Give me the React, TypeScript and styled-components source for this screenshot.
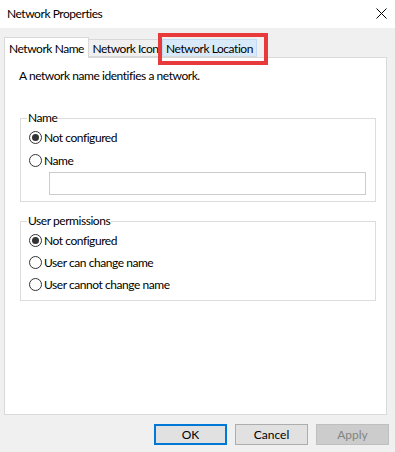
import styled, { createGlobalStyle } from "styled-components";

const GlobalStyle = createGlobalStyle`
    html, body {
        margin: 0;
        padding: 0;
        background: #f0f0f0;
    }
    body {
        font-family: "Segoe UI", Lato, "Noto Sans", sans-serif;
        font-size: 12px;
        letter-spacing: -0.45px;
        color: #000;
    }
`;

const Window = styled.div`
    width: 395px;
    height: 452px;
    display: flex;
    flex-direction: column;
    background: #f0f0f0;
    overflow: hidden;
`;

const TitleBar = styled.div`
    height: 27px;
    background: #fff;
    display: flex;
    align-items: center;
    justify-content: space-between;
    padding: 0 8px 1px 7px;
`;

const Title = styled.span`
    font-size: 12px;
`;

const Body = styled.div`
    padding: 9px 6px 0 4px;
    display: flex;
    flex-direction: column;
`;

const TabStrip = styled.div`
    position: relative;
    display: flex;
    align-items: flex-end;
    height: 20px;
`;

const Tab = styled.div<{ $active?: boolean; $hover?: boolean; $w: number }>`
    box-sizing: border-box;
    width: ${(p) => p.$w}px;
    height: ${(p) => (p.$active ? "21px" : "18px")};
    margin-bottom: ${(p) => (p.$active ? "-1px" : "0")};
    display: flex;
    align-items: center;
    justify-content: center;
    background: ${(p) => (p.$active ? "#fff" : p.$hover ? "#d8eaf9" : "#f0f0f0")};
    border: 1px solid ${(p) => (p.$hover ? "#c4dcf3" : "#d9d9d9")};
    border-bottom: ${(p) => (p.$active ? "none" : "1px solid #d9d9d9")};
    margin-left: ${(p) => (p.$active ? "0" : "-1px")};
    z-index: ${(p) => (p.$active ? 2 : 1)};
    white-space: nowrap;
`;

const Highlight = styled.div`
    position: absolute;
    left: 154px;
    top: -4px;
    width: 110px;
    height: 32px;
    box-sizing: border-box;
    border: 4px solid #e8393b;
    z-index: 3;
    pointer-events: none;
`;

const Panel = styled.div`
    box-sizing: border-box;
    width: 383px;
    height: 358px;
    background: #fff;
    border: 1px solid #d9d9d9;
    padding: 10px 10px 0 15px;
    display: flex;
    flex-direction: column;
`;

const Description = styled.div`
    line-height: 16px;
    margin-left: -1px;
`;

const Group = styled.fieldset<{ $top: number }>`
    margin: ${(p) => p.$top}px 0 0 0;
    padding: 0 8px ${(p) => (p.$top > 20 ? 6 : 5)}px 8px;
    border: 1px solid #dcdcdc;
    min-width: 0;
    display: flex;
    flex-direction: column;
`;

const Legend = styled.legend`
    padding: 0 1px;
    margin-left: -2px;
    line-height: 16px;
`;

const Row = styled.label<{ $h: number }>`
    height: ${(p) => p.$h}px;
    display: flex;
    align-items: center;
    gap: 2px;
`;

const Radio = styled.span<{ $checked?: boolean }>`
    box-sizing: border-box;
    width: 13px;
    height: 13px;
    border-radius: 50%;
    border: 1px solid #333;
    background: #fff;
    display: flex;
    align-items: center;
    justify-content: center;
    &::after {
        content: "";
        width: 7px;
        height: 7px;
        border-radius: 50%;
        background: #333;
        display: ${(p) => (p.$checked ? "block" : "none")};
    }
`;

const TextBox = styled.input`
    box-sizing: border-box;
    margin: 0 0 0 20px;
    width: 317px;
    height: 23px;
    border: 1px solid #cccccc;
    background: #fff;
    outline: none;
`;

const Footer = styled.div`
    display: flex;
    justify-content: flex-end;
    gap: 8px;
    padding: 9px 0 0 0;
`;

const Button = styled.button<{ $primary?: boolean }>`
    box-sizing: border-box;
    width: 73px;
    height: 21px;
    font: inherit;
    color: ${(p) => (p.disabled ? "#838383" : "#000")};
    background: ${(p) => (p.disabled ? "#cccccc" : "#e1e1e1")};
    border: ${(p) =>
        p.$primary ? "2px solid #0078d7" : p.disabled ? "1px solid #bfbfbf" : "1px solid #adadad"};
    padding: 0;
`;

const CloseIcon = () => (
    <svg width="11" height="11" viewBox="0 0 11 11">
        <path d="M0.5 0.5 L10.5 10.5 M10.5 0.5 L0.5 10.5" stroke="#000" strokeWidth="1" />
    </svg>
);

export default function App() {
    return (
        <Window>
            <GlobalStyle />
            <TitleBar>
                <Title>Network Properties</Title>
                <CloseIcon />
            </TitleBar>
            <Body>
                <TabStrip>
                    <Tab $active $w={85}>Network Name</Tab>
                    <Tab $w={75}>Network Icon</Tab>
                    <Tab $hover $w={95}>Network Location</Tab>
                    <Highlight />
                </TabStrip>
                <Panel>
                    <Description>A network name identifies a network.</Description>
                    <Group $top={26}>
                        <Legend>Name</Legend>
                        <Row $h={23}>
                            <Radio $checked />
                            Not configured
                        </Row>
                        <Row $h={23}>
                            <Radio />
                            Name
                        </Row>
                        <TextBox />
                    </Group>
                    <Group $top={11}>
                        <Legend>User permissions</Legend>
                        <Row $h={22}>
                            <Radio $checked />
                            Not configured
                        </Row>
                        <Row $h={22}>
                            <Radio />
                            User can change name
                        </Row>
                        <Row $h={22}>
                            <Radio />
                            User cannot change name
                        </Row>
                    </Group>
                </Panel>
                <Footer>
                    <Button $primary>OK</Button>
                    <Button>Cancel</Button>
                    <Button disabled>Apply</Button>
                </Footer>
            </Body>
        </Window>
    );
}
